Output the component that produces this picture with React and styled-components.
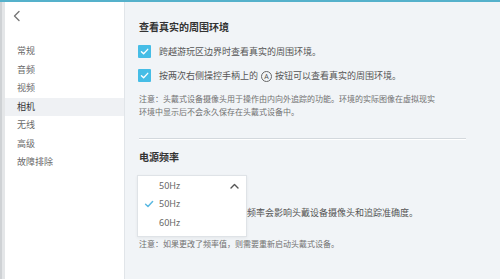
import React, { useState } from "react";
import styled, { createGlobalStyle } from "styled-components";

const GlobalStyle = createGlobalStyle`
  html, body {
    margin: 0;
    padding: 0;
    background: #f1f4f7;
  }
  body {
    font-family: "Noto Sans CJK SC", "Noto Sans", sans-serif;
  }
`;

const Page = styled.div`
  display: flex;
  height: 277px;
  border-top: 2px solid #55b1cb;
  overflow: hidden;
`;

const LeftEdge = styled.div`
  width: 3px;
  background: #e4e6e8;
  border-left: 2px solid #cfd2d5;
`;

const Sidebar = styled.nav`
  width: 119px;
  background: #ffffff;
  border-right: 1px solid #e1e5e9;
  display: flex;
  flex-direction: column;
`;

const BackButton = styled.button`
  display: flex;
  align-items: center;
  height: 28px;
  padding: 0 0 0 7px;
  margin: 0 0 12px;
  border: none;
  background: none;
  color: #777;
  cursor: pointer;
`;

const NavItem = styled.div`
  height: 18.5px;
  line-height: 18.5px;
  padding-left: 12px;
  font-size: 9px;
  color: ${(p) => (p.$active ? "#333" : "#6a6a6a")};
  background: ${(p) => (p.$active ? "#eff1f4" : "transparent")};
  cursor: pointer;
`;

const Content = styled.main`
  flex: 1;
  padding: 18px 34px 0 14px;
  color: #555;
`;

const Heading = styled.h3`
  margin: ${(p) => p.$mt || 0}px 0 0;
  font-size: 10px;
  line-height: 14px;
  font-weight: 700;
  color: #333;
`;

const CheckRow = styled.label`
  display: flex;
  align-items: center;
  height: 24px;
  gap: 8px;
  font-size: 9px;
  color: #555;
  margin-top: ${(p) => p.$mt || 0}px;
`;

const Box = styled.span`
  display: inline-flex;
  align-items: center;
  justify-content: center;
  width: 13px;
  height: 13px;
  margin-left: -1px;
  border-radius: 1px;
  background: #46bde6;
`;

const CircleA = styled.span`
  display: inline-flex;
  align-items: center;
  justify-content: center;
  width: 9px;
  height: 9px;
  margin: 0 3px;
  border: 1px solid #666;
  border-radius: 50%;
  font-size: 7px;
  line-height: 1;
  font-family: "Noto Sans", sans-serif;
  color: #555;
`;

const Note = styled.p`
  max-width: 300px;
  margin: ${(p) => p.$mt || 0}px 0 0;
  font-size: 8px;
  line-height: 13px;
  color: #707070;
`;

const Divider = styled.hr`
  margin: 20px 0 0;
  border: none;
  border-top: 1px solid #d3d8dd;
  border-bottom: 1px solid #ffffff;
`;

const SelectWrap = styled.div`
  position: relative;
  height: 19px;
  margin-top: 12px;
`;

const Menu = styled.ul`
  position: absolute;
  top: -1px;
  left: -2px;
  width: 108px;
  margin: 0;
  padding: 1px 0 3.5px;
  list-style: none;
  background: #ffffff;
  border: 1px solid #dfe3e7;
  box-shadow: 0 1px 3px rgba(0, 0, 0, 0.06);
  z-index: 2;
`;

const MenuItem = styled.li`
  position: relative;
  height: 18.5px;
  line-height: 18.5px;
  padding-left: 21px;
  font-size: 9px;
  font-family: "Noto Sans", sans-serif;
  color: #666;
`;

const Mark = styled.span`
  position: absolute;
  left: ${(p) => p.$left}px;
  top: 0;
  height: 100%;
  display: flex;
  align-items: center;
`;

const Description = styled.p`
  margin: 11.5px 0 0;
  font-size: 9px;
  line-height: 13px;
  color: #555;
`;

const Check = ({ color = "#fff", size = 9 }) => (
  <svg width={size} height={size} viewBox="0 0 10 10">
    <path
      d="M1.6 5.2 L4 7.5 L8.6 2.6"
      fill="none"
      stroke={color}
      strokeWidth="1.5"
      strokeLinecap="round"
      strokeLinejoin="round"
    />
  </svg>
);

const navItems = ["常规", "音频", "视频", "相机", "无线", "高级", "故障排除"];

export default function App() {
  const [active, setActive] = useState("相机");
  const [freq, setFreq] = useState("50Hz");

  return (
    <>
      <GlobalStyle />
      <Page>
        <LeftEdge />
        <Sidebar>
          <BackButton aria-label="返回">
            <svg width="10" height="12" viewBox="0 0 10 12">
              <path
                d="M7 1.5 L2.5 6 L7 10.5"
                fill="none"
                stroke="#777"
                strokeWidth="1.4"
                strokeLinecap="round"
                strokeLinejoin="round"
              />
            </svg>
          </BackButton>
          {navItems.map((item) => (
            <NavItem
              key={item}
              $active={item === active}
              onClick={() => setActive(item)}
            >
              {item}
            </NavItem>
          ))}
        </Sidebar>
        <Content>
          <Heading>查看真实的周围环境</Heading>
          <CheckRow $mt={5}>
            <Box>
              <Check />
            </Box>
            跨越游玩区边界时查看真实的周围环境。
          </CheckRow>
          <CheckRow>
            <Box>
              <Check />
            </Box>
            <span>
              按两次右侧操控手柄上的
              <CircleA>A</CircleA>
              按钮可以查看真实的周围环境。
            </span>
          </CheckRow>
          <Note $mt={4.5}>
            注意：头戴式设备摄像头用于操作由内向外追踪的功能。环境的实际图像在虚拟现实环境中显示后不会永久保存在头戴式设备中。
          </Note>
          <Divider />
          <Heading $mt={10}>电源频率</Heading>
          <SelectWrap>
            <Menu>
              <MenuItem>
                {freq}
                <Mark $left={92}>
                  <svg width="9" height="6" viewBox="0 0 9 6">
                    <path
                      d="M1 5 L4.5 1.5 L8 5"
                      fill="none"
                      stroke="#555"
                      strokeWidth="1.4"
                      strokeLinecap="round"
                      strokeLinejoin="round"
                    />
                  </svg>
                </Mark>
              </MenuItem>
              {["50Hz", "60Hz"].map((f) => (
                <MenuItem key={f} onClick={() => setFreq(f)}>
                  {f === freq && (
                    <Mark $left={6}>
                      <Check color="#5bb9e2" size={10} />
                    </Mark>
                  )}
                  {f}
                </MenuItem>
              ))}
            </Menu>
          </SelectWrap>
          <Description>
            选择本地的电源频率。错误频率会影响头戴设备摄像头和追踪准确度。
          </Description>
          <Note $mt={18}>注意：如果更改了频率值，则需要重新启动头戴式设备。</Note>
        </Content>
      </Page>
    </>
  );
}
